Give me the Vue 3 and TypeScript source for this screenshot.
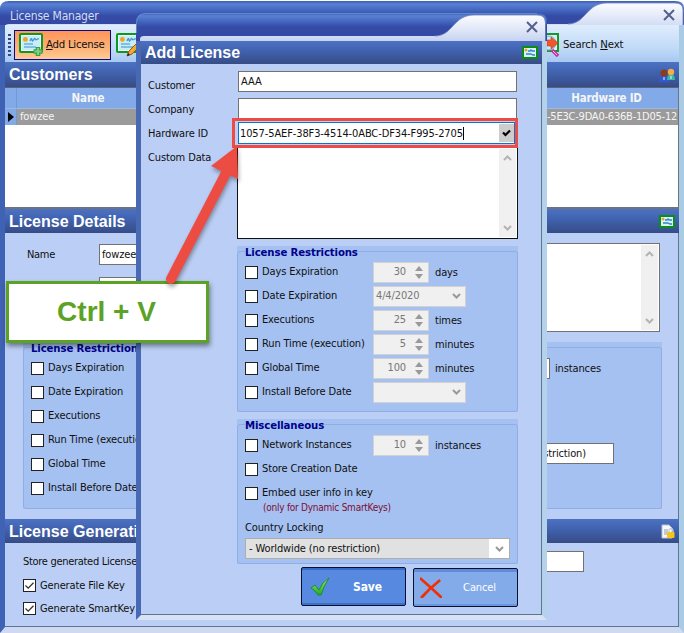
<script setup lang="ts">
interface Restriction {
  label: string
  kind: 'spin' | 'date'
  value: string
  unit: string
}

const restrictions: Restriction[] = [
  { label: 'Days Expiration', kind: 'spin', value: '30', unit: 'days' },
  { label: 'Date Expiration', kind: 'date', value: '4/4/2020', unit: '' },
  { label: 'Executions', kind: 'spin', value: '25', unit: 'times' },
  { label: 'Run Time (execution)', kind: 'spin', value: '5', unit: 'minutes' },
  { label: 'Global Time', kind: 'spin', value: '100', unit: 'minutes' },
  { label: 'Install Before Date', kind: 'date', value: '', unit: '' },
]
const outputs: string[] = ['Generate File Key', 'Generate SmartKey']
</script>

<template>
  <div class="desktop">
    <svg class="defs" width="0" height="0">
      <defs>
        <linearGradient id="title" x1="0" y1="0" x2="0" y2="1">
          <stop offset="0" stop-color="#3a5cb4" />
          <stop offset=".1" stop-color="#5a80d2" />
          <stop offset=".28" stop-color="#456ac2" />
          <stop offset=".5" stop-color="#354ba6" />
          <stop offset="1" stop-color="#3248a2" />
        </linearGradient>
        <linearGradient id="tab" x1="0" y1="0" x2="0" y2="1">
          <stop offset="0" stop-color="#fbfcff" />
          <stop offset=".5" stop-color="#e3e9f8" />
          <stop offset="1" stop-color="#c6d4f1" />
        </linearGradient>
        <linearGradient id="green" x1="0" y1="0" x2="0" y2="1">
          <stop offset="0" stop-color="#8df078" />
          <stop offset="1" stop-color="#22a822" />
        </linearGradient>
        <symbol id="cert" viewBox="0 0 24 20">
          <rect x="1" y="1" width="22" height="18" rx="1" fill="#f4fcff" stroke="#0c9a1c" stroke-width="2" />
          <rect x="3" y="3" width="18" height="14" fill="#c9ecfb" />
          <circle cx="6.4" cy="6.4" r="2.4" fill="#eea51a" />
          <path d="M11 8c1-3 2-3 2-1s1 1 2-1 1 1 2 1 1-2 3-1M5 11h9M5 14h12" fill="none" stroke="#3a93c8" stroke-width="1.2" />
        </symbol>
        <symbol id="certsmall" viewBox="0 0 16 13">
          <rect x="1" y="1" width="14" height="11" fill="#d9f2fc" stroke="#0a8f14" stroke-width="2" />
          <circle cx="4" cy="4" r="1.500" fill="#eea51a" />
          <path d="M6 5h2l1-1 1 1h3M4 8h5l2 1h2" fill="none" stroke="#2f86c4" stroke-width="1.300" />
        </symbol>
        <symbol id="close" viewBox="0 0 12 12">
          <path d="M1 1l10 10M11 1L1 11" stroke="#54618c" stroke-width="2" />
        </symbol>
        <symbol id="up" viewBox="0 0 9 6"><path d="M1 5l3.5-3.500L8 5" fill="none" stroke="currentColor" stroke-width="2" /></symbol>
        <symbol id="down" viewBox="0 0 9 6"><path d="M1 1l3.500 3.500L8 1" fill="none" stroke="currentColor" stroke-width="2" /></symbol>
      </defs>
    </svg>

    <section class="window main">
      <header class="titlebar">
        <svg class="chrome" width="684" height="31" viewBox="0 0 684 31">
          <path d="M0 31V9Q0 1 9 1H675Q684 1 684 8V31Z" fill="url(#title)" />
          <path d="M5 31V27Q5 24 9 24H568C586 24 586 3 607 3H675Q683 3 683 10V31Z" fill="url(#tab)" />
          <path d="M568 24C586 24 586 3 607 3H675Q683 3 683 10V31" fill="none" stroke="#6e86b8" stroke-width=".8" />
        </svg>
        <span>License Manager</span>
        <svg class="x" width="12" height="12"><use href="#close" /></svg>
      </header>
      <div class="content">
        <nav class="toolbar">
          <i class="grip"></i>
          <button class="tool active">
            <svg width="25" height="26" viewBox="0 0 25 26">
              <use href="#cert" width="24" height="20" y="1" />
              <path d="M19 15v9M14.500 19.500h9" stroke="#3c9c45" stroke-width="4.600" />
              <path d="M19 16v7M15.500 19.500h7" stroke="#7bd182" stroke-width="2.200" />
            </svg>
            <span><u>A</u>dd License</span>
          </button>
          <button class="tool edit">
            <svg width="25" height="26" viewBox="0 0 25 26">
              <use href="#cert" width="24" height="20" y="1" />
              <path d="M11 24l2-5 7-7 3 3-7 7z" fill="#f5a831" stroke="#97591b" />
              <path d="M11 24l1-3 2 2z" fill="#222" />
            </svg>
          </button>
          <button class="tool search">
            <svg width="20" height="26" viewBox="0 0 20 26">
              <rect x="3" y="2" width="15" height="17" fill="#d9f0fb" stroke="#159a26" stroke-width="2" />
              <circle cx="9" cy="11" r="7" fill="#c8e9f8" stroke="#75b2d5" />
              <path d="M7 8h4V5l7 6-7 6v-3H7z" fill="#f2562a" stroke="#c53b1c" stroke-width=".6" />
              <path d="M12 18l6 6" stroke="#cb2ca8" stroke-width="3.400" />
              <path d="M13 19l4 4" stroke="#f5bce8" />
            </svg>
            <span>Search <u>N</u>ext</span>
          </button>
        </nav>

        <h2 class="bar customers">Customers
          <svg width="16" height="14" viewBox="0 0 16 14">
            <path d="M0 14q0-6 5-6t5 6z" fill="#3457d8" /><circle cx="5" cy="5" r="3.600" fill="#8a3c1c" />
            <path d="M8 12q0-6 4-6t4 6z" fill="#36b8a6" /><circle cx="12" cy="4" r="3.200" fill="#f4ac48" />
            <path d="M5 9v3M12 8v3" stroke="#e8f3ff" />
          </svg>
        </h2>
        <div class="table">
          <div class="tr th"><i class="mark"></i><b class="name">Name</b><b class="hw">Hardware ID</b></div>
          <div class="tr sel">
            <i class="mark"><svg width="6" height="10"><path d="M0 0l6 5-6 5z" fill="#000" /></svg></i>
            <span class="name">fowzee</span><span class="hw">-5E3C-9DA0-636B-1D05-12</span>
          </div>
        </div>

        <h2 class="bar details">License Details <svg width="16" height="13"><use href="#certsmall" /></svg></h2>
        <div class="panel">
          <div class="col left">
            <div class="field"><label>Name</label><div class="box">fowzee</div></div>
            <div class="field"><label></label><div class="box"></div></div>
            <div class="group">
              <div class="frame">
                <h3>License Restrictions</h3>
                <label v-for="r in restrictions" :key="r.label" class="opt"><i class="check"></i>{{ r.label }}</label>
              </div>
            </div>
          </div>
          <div class="col right">
            <div class="memo">
              <div class="scroll"><svg width="9" height="6"><use href="#up" /></svg><svg width="9" height="6"><use href="#down" /></svg></div>
            </div>
            <div class="group">
              <div class="frame">
                <div class="inst"><div class="box"></div><span>instances</span></div>
                <div class="box country">(no restriction)</div>
              </div>
            </div>
          </div>
        </div>

        <h2 class="bar generation">License Generation
          <svg width="14" height="15" viewBox="0 0 14 15">
            <path d="M1 1h7l3 3v10H1z" fill="#f6f8fb" stroke="#b9c2d3" /><path d="M3 6h4M3 8h4M3 10h3" stroke="#8e9db8" />
            <path d="M8 8V6q2-3 4 0v2" fill="none" stroke="#c7cbd0" stroke-width="1.300" /><rect x="6" y="8" width="7.500" height="6" rx="1" fill="#f4c51b" />
          </svg>
        </h2>
        <div class="gen">
          <div class="store"><span>Store generated Licenses in</span><div class="box"></div></div>
          <label v-for="o in outputs" :key="o" class="opt">
            <i class="check"><svg width="11" height="11" viewBox="0 0 11 11"><path d="M1.500 5.500l2.700 2.700L9.500 2.800" fill="none" stroke="#333" stroke-width="1.300" /></svg></i>{{ o }}
          </label>
        </div>
      </div>
    </section>

    <section class="window dialog">
      <header class="titlebar">
        <svg class="chrome" width="411" height="28" viewBox="0 0 411 28">
          <path d="M0 28V10Q0 0 10 0H401Q411 0 411 9V28Z" fill="url(#title)" />
          <path d="M.5 20V10Q.5 .5 10 .5H401" fill="none" stroke="#6b98d4" opacity=".7" />
          <path d="M4 28V26Q4 23 8 23H299C317 23 317 2 338 2H401Q409 2 409 9V28Z" fill="url(#tab)" />
          <path d="M299 23C317 23 317 2 338 2H401Q409.500 2 409.500 9V28" fill="none" stroke="#6e86b8" stroke-width=".8" />
        </svg>
        <svg class="x" width="12" height="12"><use href="#close" /></svg>
      </header>
      <div class="content">
        <h2 class="bar">Add License <svg width="16" height="13"><use href="#certsmall" /></svg></h2>
        <div class="form">
          <div class="labels"><label>Customer</label><label>Company</label><label>Hardware ID</label><label>Custom Data</label></div>
          <div class="inputs">
            <div class="box customer">AAA</div>
            <div class="box company"></div>
            <div class="box hwid"><span>1057-5AEF-38F3-4514-0ABC-DF34-F995-2705</span><i class="caret"></i>
              <b><svg width="9" height="8" viewBox="0 0 9 8"><path d="M1 3.500l2.500 2.500L8 1.500" fill="none" stroke="#000" stroke-width="2.200" /></svg></b>
            </div>
            <div class="memo">
              <div class="scroll"><svg width="9" height="6"><use href="#up" /></svg><svg width="9" height="6"><use href="#down" /></svg></div>
            </div>
          </div>
        </div>

        <div class="group restrict">
          <div class="frame">
            <h3>License Restrictions</h3>
            <div v-for="r in restrictions" :key="r.label" class="row">
              <label class="opt"><i class="check"></i>{{ r.label }}</label>
              <div v-if="r.kind === 'spin'" class="spin">{{ r.value }}
                <span class="arrows"><svg width="8" height="5"><path d="M0 5l4-5 4 5z" fill="#999" /></svg><svg width="8" height="5"><path d="M0 0l4 5 4-5z" fill="#999" /></svg></span>
              </div>
              <div v-else class="date">{{ r.value }}<svg width="9" height="6"><use href="#down" /></svg></div>
              <span class="unit">{{ r.unit }}</span>
            </div>
          </div>
        </div>

        <div class="group misc">
          <div class="frame">
            <h3>Miscellaneous</h3>
            <div class="row">
              <label class="opt"><i class="check"></i>Network Instances</label>
              <div class="spin">10
                <span class="arrows"><svg width="8" height="5"><path d="M0 5l4-5 4 5z" fill="#999" /></svg><svg width="8" height="5"><path d="M0 0l4 5 4-5z" fill="#999" /></svg></span>
              </div>
              <span class="unit">instances</span>
            </div>
            <label class="opt"><i class="check"></i>Store Creation Date</label>
            <label class="opt"><i class="check"></i>Embed user info in key</label>
            <p class="note">(only for Dynamic SmartKeys)</p>
            <p class="lock">Country Locking</p>
            <div class="select">- Worldwide (no restriction)<i><svg width="9" height="6"><use href="#down" /></svg></i></div>
          </div>
        </div>

        <footer>
          <button class="save">
            <svg width="20" height="20" viewBox="0 0 20 20"><path d="M1 11l4-3 4 5q3-8 10-12-5 7-8 17H8q-3-5-7-7z" fill="url(#green)" stroke="#15851c" stroke-width=".8" /></svg>
            <span>Save</span>
          </button>
          <button class="cancel">
            <svg width="22" height="21" viewBox="0 0 22 21"><path d="M1 2q7 6 20 18M19 4Q9 12 2 20" fill="none" stroke="#ee3008" stroke-width="2.800" stroke-linecap="square" /></svg>
            <span>Cancel</span>
          </button>
        </footer>
      </div>
    </section>

    <div class="highlight"></div>
    <div class="callout">Ctrl + V</div>
    <svg class="arrow" width="100" height="160" viewBox="150 135 100 160">
      <path d="M171 279L227 171" stroke="#ed4c43" stroke-width="10" stroke-linecap="round" />
      <path d="M237 146L211 166L238 179Z" fill="#ed4c43" />
    </svg>
  </div>
</template>

<style>
body { margin: 0; overflow: hidden; }
</style>

<style scoped>
* { box-sizing: border-box; }
.desktop { position: relative; width: 684px; height: 633px; overflow: hidden; background: #fff; font: 11px/14px "DejaVu Sans Condensed", "DejaVu Sans", sans-serif; font-stretch: condensed; color: #101010; letter-spacing: -.13px; white-space: nowrap; }
.defs { position: absolute; }
svg { display: block; flex: none; }
h2, h3, p { margin: 0; }
i { font-style: normal; }
button { font: inherit; letter-spacing: inherit; padding: 0; color: inherit; background: none; border: 0; display: flex; align-items: center; }
.window { position: absolute; display: flex; flex-direction: column; }
.main { left: 0; top: 0; width: 684px; height: 633px; }
.titlebar { display: flex; justify-content: space-between; align-items: center; position: relative; height: 31px; flex: none; color: #d3dcf4; padding: 0 9px 0 10px; }
.titlebar > * { position: relative; }
.titlebar .chrome { position: absolute; left: 0; top: 0; }
.titlebar span { font-size: 12px; letter-spacing: -.2px; }
.titlebar .x { margin-left: auto; }
.main .titlebar { height: 25px; padding-top: 6px; }
.main .x { margin-bottom: 2px; }
.content { flex: 1; display: flex; flex-direction: column; overflow: hidden; position: relative; background: #bbcff6; }
.main .content { border-left: 5px solid #3f62b5; border-right: 5px solid #a9cbe6; border-bottom: 6px solid #cfdaf2; box-shadow: inset 0 -1px #5d7690, inset -1px 0 #5d7690; }
.toolbar { display: flex; align-items: center; height: 37px; flex: none; background: linear-gradient(#dfedfd, #c2dbf8 60%, #a8c8f2); padding: 5px 0 0 3px; align-items: flex-start; font-size: 11.300px; }
.grip { width: 3px; height: 23px; margin: 4px 3px 0 0; background: repeating-linear-gradient(#34478c 0 2px, transparent 2px 4px); }
.tool { height: 30px; }
.tool.active { width: 97px; padding-left: 4px; gap: 2px; border: 1px solid #0a0a84; background: linear-gradient(#ff9459, #fdb277 60%, #fecb92); letter-spacing: -.25px; }
.tool.edit { margin-left: 5px; width: 424px; }
.tool.search { margin-left: 0; gap: 3px; }
.bar { display: flex; flex: none; justify-content: space-between; align-items: center; height: 23px; padding: 0 4px; color: #fff; font: bold 16px/23px "Liberation Sans", Arial, sans-serif; letter-spacing: 0; background: linear-gradient(#4d72c3, #4163b0 40%, #374c86); }
.customers { height: 26px; border-bottom: 1px solid #5b6472; }
.table { height: 121px; flex: none; background: #fff; border-bottom: 2px solid #6b7480; border-right: 1px solid #6b7480; }
.tr { display: flex; align-items: center; height: 16px; color: #f5f5f5; background: #9b9b9b; }
.th { height: 21px; background: #82a9e8; border-bottom: 1px solid #9fb8dc; }
.mark { width: 12px; display: flex; justify-content: center; align-self: stretch; align-items: center; background: #82a9e8; border-right: 1px solid #7398d6; }
.name { width: 142px; padding-left: 3px; }
.th .name { text-align: center; padding: 0; }
.hw { margin-left: 388px; flex: 1; letter-spacing: -.22px; }
.th .hw { text-align: center; padding-right: 12px; }
.th b { font-size: 11.500px; }
.details { height: 24px; }
.panel { display: flex; height: 286px; flex: none; }
.col.left { width: 330px; padding: 11px 0 0 18px; display: flex; flex-direction: column; gap: 12px; flex: none; }
.field { display: flex; align-items: center; padding-left: 4px; }
.field label { width: 72px; font-size: 11px; letter-spacing: -.3px; }
.box { height: 21px; background: #fff; border: 1px solid #727272; line-height: 19px; padding-left: 2px; }
.field .box { width: 200px; }
.group { background: #a5c1f1; padding-top: 5px; }
.frame { border: 1px solid #8faee5; border-radius: 3px; display: flex; flex-direction: column; }
.group h3 { margin-top: -6px; margin-left: 7px; height: 14px; align-self: flex-start; background: #a5c1f1; color: #00008c; font: bold 11.300px/14px "DejaVu Sans Condensed", sans-serif; }
.left .group { margin-top: 32px; }
.opt { display: flex; align-items: center; height: 24px; gap: 4px; }
.check { width: 13px; height: 13px; flex: none; background: #fff; border: 1px solid #222; }
.left .frame { height: 162px; }
.left .opt { padding-left: 7px; gap: 4px; }
.col.right { flex: 1; padding: 10px 17px 0 0; display: flex; flex-direction: column; }
.memo { display: flex; justify-content: flex-end; height: 89px; background: #fff; border: 1px solid #727272; padding: 1px; }
.right .memo { margin-right: 2px; }
.scroll { width: 17px; background: #f0f0f0; display: flex; flex-direction: column; justify-content: space-between; align-items: center; padding: 6px 0; color: #b4b4b4; }
.right .group { margin-top: 10px; }
.right .frame { height: 162px; padding-top: 10px; }
.inst { display: flex; align-items: center; gap: 5px; }
.inst .box { width: 54px; margin-left: 160px; }
.country { width: 162px; margin: 64px 0 0 116px; text-align: right; padding-right: 27px; }
.generation { height: 24px; }
.gen { padding: 8px 0 0 18px; display: flex; flex-direction: column; }
.store { display: flex; justify-content: space-between; align-items: center; width: 561px; margin-bottom: 2px; }
.store span { font-size: 11px; letter-spacing: -.3px; }
.store .box { width: 250px; }
.gen .opt { height: 23px; gap: 4px; }
.dialog { left: 136px; top: 13px; width: 411px; height: 607px; }
.dialog .titlebar { height: 28px; }
.dialog .content { border-left: 5px solid #4a69b4; border-right: 5px solid #b4d2ea; border-bottom: 5px solid #d9e1f5; box-shadow: inset 0 -1px #5d7690, inset -1px 0 #5d7690; }
.form { display: flex; padding-top: 7px; height: 182px; }
.labels { width: 96px; padding: 3px 0 0 7px; display: flex; flex-direction: column; }
.labels label { height: 24px; line-height: 24px; }
.inputs { width: 281px; display: flex; flex-direction: column; }
.customer, .company { margin-left: 1px; width: 279px; }
.company { margin-top: 6px; }
.hwid { display: flex; align-items: center; margin: 3px 0 0 1px; width: 277px; height: 22px; border-color: #0874cf; padding-left: 1px; }
.hwid span { letter-spacing: -.11px; }
.hwid b { margin-left: auto; height: 18px; width: 15px; background: #cdcdcd; display: flex; justify-content: center; align-items: center; }
.caret { width: 1px; height: 13px; background: #000; }
.inputs .memo { margin-top: 3px; height: 92px; border-color: #111; }
.restrict, .misc { width: 281px; margin-left: 96px; flex: none; }
.restrict .frame { height: 161px; }
.row { display: flex; align-items: center; height: 24px; }
.frame > .opt { padding-left: 7px; }
.row .opt { padding-left: 7px; width: 135px; flex: none; }
.spin { display: flex; align-items: center; justify-content: flex-end; width: 56px; height: 21px; background: #f0f0f0; border: 1px solid #d2d2d2; color: #777; padding-right: 5px; gap: 9px; }
.arrows { display: flex; flex-direction: column; gap: 3px; }
.unit { margin-left: 6px; padding-top: 2px; }
.date { display: flex; align-items: center; justify-content: space-between; width: 93px; height: 21px; background: #f0f0f0; border: 1px solid #d2d2d2; color: #777; padding: 0 4px 0 2px; }
.date svg, .select svg { color: #999; }
.date svg { margin-left: auto; }
.misc { margin-top: 7px; }
.misc .frame { height: 140px; }
.note { margin: -4px 0 0 25px; height: 14px; font: 10px/14px "DejaVu Sans Condensed", sans-serif; letter-spacing: -.25px; color: #7d0d35; }
.lock { margin: 6px 0 0 7px; height: 14px; }
.select { display: flex; justify-content: space-between; align-items: center; width: 265px; height: 21px; margin: 3px 0 0 7px; background: #e1e1e1; border: 1px solid #adadad; padding-left: 3px; }
.select i { width: 20px; height: 19px; background: #fff; display: flex; justify-content: center; align-items: center; }
footer { display: flex; gap: 7px; margin: 3px 0 0 160px; }
footer button { width: 105px; height: 39px; border: 1px solid #06112e; border-radius: 2px; color: #fff; }
footer span { flex: 1; text-align: center; }
.save { background: #5689df; box-shadow: inset 0 2px #356bc8, inset 0 -2px #3c70c9; padding: 0 0 0 8px; font-weight: bold; font-size: 12px; }
.cancel { margin-top: 1px; background: #84abe9; box-shadow: inset 0 3px #5d8cdc, inset 0 -2px #6c97df; padding: 0 0 0 6px; }
.highlight { position: absolute; left: 232px; top: 118px; width: 286px; height: 30px; border: 3px solid #ed4c43; }
.callout { position: absolute; left: 6px; top: 281px; width: 203px; height: 62px; border: 3px solid #5ca224; background: #fff; color: #5ca224; text-align: center; padding-right: 2px; font: bold 28px/55px "Liberation Sans", Arial, sans-serif; box-shadow: 1px 3px 5px rgba(0, 0, 0, .45); letter-spacing: 0; }
.arrow { position: absolute; left: 150px; top: 135px; filter: drop-shadow(1px 3px 2px rgba(0, 0, 0, .35)); }
</style>
